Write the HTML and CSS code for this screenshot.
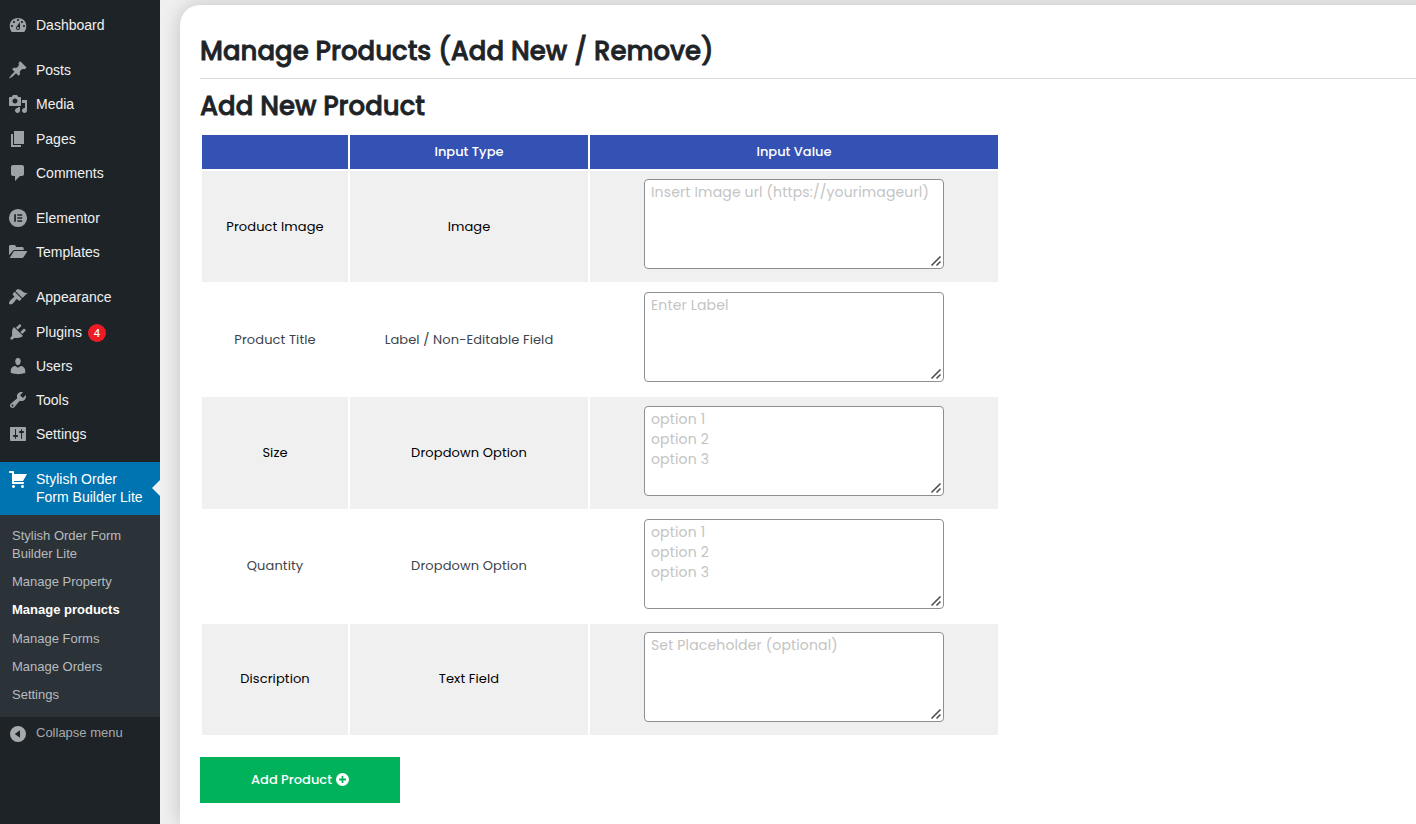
FILE: index.html
```html
<!DOCTYPE html>
<html lang="en">
<head>
<meta charset="utf-8">
<title>Manage Products</title>
<link rel="stylesheet" href="styles.css">
</head>
<body>
<svg class="defs" width="0" height="0"><symbol id="grip" viewBox="0 0 12 12"><path d="M1.500 10.500L10.500 1.500M6.500 10.500L10.500 6.500" stroke="#505050" stroke-width="1.600" fill="none"/></symbol></svg>
<div class="layout">
<nav class="sidebar">
  <ul class="menu">
    <li class="item"><svg class="icon" viewBox="0 0 20 20"><path d="M3.76 17h12.48c1.34-1.63 2.01-3.82 2.01-6 0-5.06-3.69-8-8.25-8S1.75 5.94 1.75 11c0 2.18.67 4.37 2.01 6zM10 4c.55 0 1 .45 1 1s-.45 1-1 1-1-.45-1-1 .45-1 1-1zM6 6c.55 0 1 .45 1 1s-.45 1-1 1-1-.45-1-1 .45-1 1-1zm8 0c.55 0 1 .45 1 1s-.45 1-1 1-1-.45-1-1 .45-1 1-1zm-5.37 5.55L12 7v6c0 1.1-.9 2-2 2s-2-.9-2-2c0-.57.24-1.08.63-1.45zM4 10c.55 0 1 .45 1 1s-.45 1-1 1-1-.45-1-1 .45-1 1-1zm12 0c.55 0 1 .45 1 1s-.45 1-1 1-1-.45-1-1 .45-1 1-1zm-5 3c0-.55-.45-1-1-1s-1 .45-1 1 .45 1 1 1 1-.45 1-1z"/></svg><span>Dashboard</span></li>
    <li class="item group"><svg class="icon" viewBox="0 0 20 20"><path d="M10.44 3.02l1.82-1.82 6.36 6.35-1.83 1.82c-1.05-.68-2.48-.57-3.41.36l-.75.75c-.92.93-1.04 2.35-.35 3.41l-1.83 1.82-2.41-2.41-2.8 2.79c-.42.42-3.38 2.71-3.8 2.29s1.86-3.39 2.28-3.81l2.79-2.79L4.1 9.36l1.83-1.82c1.05.69 2.48.57 3.4-.36l.75-.75c.93-.92 1.05-2.35.36-3.41z"/></svg><span>Posts</span></li>
    <li class="item"><svg class="icon" viewBox="0 0 20 20"><path d="M13 11V4c0-.55-.45-1-1-1h-1.67L9 1H5L3.67 3H2c-.55 0-1 .45-1 1v7c0 .55.45 1 1 1h10c.55 0 1-.45 1-1zM7 4.5c1.38 0 2.5 1.12 2.5 2.5S8.38 9.5 7 9.5 4.5 8.38 4.5 7 5.62 4.5 7 4.5zM14 6h5v10.5c0 1.38-1.12 2.5-2.5 2.5S14 17.88 14 16.5s1.12-2.5 2.5-2.5c.17 0 .34.02.5.05V9h-3V6zm-4 8.05V13h2v3.5c0 1.38-1.12 2.5-2.5 2.5S7 17.88 7 16.5 8.12 14 9.5 14c.17 0 .34.02.5.05z"/></svg><span>Media</span></li>
    <li class="item"><svg class="icon" viewBox="0 0 20 20"><path d="M6 15V2h10v13H6zm-1 1h8v2H3V5h2v11z"/></svg><span>Pages</span></li>
    <li class="item"><svg class="icon" viewBox="0 0 20 20"><path d="M5 2h9c1.1 0 2 .9 2 2v7c0 1.1-.9 2-2 2h-2l-5 5v-5H5c-1.1 0-2-.9-2-2V4c0-1.1.9-2 2-2z"/></svg><span>Comments</span></li>
    <li class="item group"><svg class="icon" viewBox="0 0 20 20"><path fill-rule="evenodd" d="M10 .9a9.1 9.1 0 1 0 0 18.200a9.1 9.1 0 0 0 0-18.200zM6.200 6.300h1.700v7.500H6.200zM9.300 6.300h4.800v1.500H9.300zM9.300 9.300h4.800v1.500H9.300zM9.300 12.300h4.800v1.500H9.300z"/></svg><span>Elementor</span></li>
    <li class="item"><svg class="icon" viewBox="0 0 20 20"><path d="M1 13.200V4.600C1 3.500 1.700 3 2.600 3h3.600c.8 0 1.200.6 1.500 1.200l.4.800h6c1 0 1.600.6 1.600 1.500V8H6.800c-1 0-1.700.4-2.300 1.200zM5.300 10c.4-.6.9-.9 1.600-.9H18.300c.6 0 .9.500.5 1.100l-3.100 4.700c-.4.700-.9 1-1.700 1H1.700z"/></svg><span>Templates</span></li>
    <li class="item group"><svg class="icon" viewBox="0 0 20 20"><path d="M14.480 11.060L7.410 3.990l1.500-1.500c.5-.56 2.300-.47 3.510.32 1.210.8 1.430 1.280 2.910 2.100 1.180.64 2.450 1.260 4.450.85zm-.71.71L6.700 4.700 4.930 6.470c-.39.39-.39 1.020 0 1.410l1.060 1.060c.39.39.39 1.030 0 1.420-.6.6-1.430 1.110-2.210 1.690-.35.26-.7.53-1.010.84C1.430 14.230.4 16.080 1.400 17.070c.99 1 2.840-.03 4.180-1.360.31-.31.58-.66.85-1.020.57-.78 1.080-1.610 1.690-2.210.39-.39 1.020-.39 1.410 0l1.060 1.060c.39.39 1.020.39 1.410 0z"/></svg><span>Appearance</span></li>
    <li class="item"><svg class="icon" viewBox="0 0 20 20"><path d="M13.110 4.360L9.870 7.600 8 5.730l3.240-3.240c.35-.34 1.050-.2 1.560.32.52.51.66 1.210.31 1.550zm-8 1.770l.91-1.120 9.010 9.010-1.190.84c-.71.71-2.630 1.160-3.820 1.160H6.140L4.900 17.260c-.59.59-1.540.59-2.120 0-.59-.58-.59-1.530 0-2.120l1.240-1.240v-3.880c0-1.130.4-3.190 1.090-3.890zm7.260 3.970l3.240-3.240c.34-.35 1.040-.21 1.550.31.52.51.66 1.210.31 1.550l-3.240 3.250z"/></svg><span>Plugins</span><span class="count">4</span></li>
    <li class="item"><svg class="icon" viewBox="0 0 20 20"><path d="M10 9.250c-2.270 0-2.730-3.440-2.730-3.440C7 4.020 7.820 2 9.970 2c2.160 0 2.980 2.020 2.710 3.810 0 0-.41 3.440-2.680 3.440zm0 2.570L12.720 10c2.390 0 4.520 2.330 4.520 4.530v2.490s-3.650 1.130-7.240 1.130c-3.650 0-7.240-1.130-7.240-1.130v-2.490c0-2.250 1.940-4.480 4.470-4.480z"/></svg><span>Users</span></li>
    <li class="item"><svg class="icon" viewBox="0 0 20 20"><path d="M16.680 9.770c-1.340 1.340-3.300 1.670-4.950.99l-5.410 6.520c-.99.99-2.590.99-3.580 0s-.99-2.590 0-3.570l6.520-5.420c-.68-1.650-.35-3.610.99-4.950 1.280-1.280 3.120-1.620 4.720-1.060l-2.890 2.890 2.820 2.820 2.860-2.870c.53 1.580.18 3.390-1.080 4.650zM3.810 16.210c.4.39 1.040.39 1.430 0 .4-.4.4-1.040 0-1.430-.39-.4-1.030-.4-1.430 0-.39.39-.39 1.030 0 1.430z"/></svg><span>Tools</span></li>
    <li class="item"><svg class="icon" viewBox="0 0 20 20"><path d="M18 16V4c0-.55-.45-1-1-1H3c-.55 0-1 .45-1 1v12c0 .55.45 1 1 1h14c.55 0 1-.45 1-1zM8 11h1c.55 0 1 .45 1 1s-.45 1-1 1H8v1.500c0 .28-.22.5-.5.5s-.5-.22-.5-.5V13H6c-.55 0-1-.45-1-1s.45-1 1-1h1V5.500c0-.28.22-.5.5-.5s.5.22.5.5V11zm5-2h-1c-.55 0-1-.45-1-1s.45-1 1-1h1V5.500c0-.28.22-.5.5-.5s.5.22.5.5V7h1c.55 0 1 .45 1 1s-.45 1-1 1h-1v5.500c0 .28-.22.5-.5.5s-.5-.22-.5-.5V9z"/></svg><span>Settings</span></li>
    <li class="item group active"><svg class="icon" viewBox="0 0 20 20"><path d="M6 13h9c.55 0 1 .45 1 1s-.45 1-1 1H5c-.55 0-1-.45-1-1V4H2c-.55 0-1-.45-1-1s.45-1 1-1h3c.55 0 1 .45 1 1v2h13l-4 7H6v1zm-.5 3c.83 0 1.500.67 1.500 1.500S6.330 19 5.500 19 4 18.330 4 17.500 4.670 16 5.500 16zm9 0c.83 0 1.500.67 1.500 1.500s-.67 1.500-1.500 1.500-1.500-.67-1.500-1.500.67-1.500 1.500-1.500z"/></svg><span>Stylish Order<br>Form Builder Lite</span></li>
  </ul>
  <ul class="submenu">
    <li>Stylish Order Form<br>Builder Lite</li>
    <li>Manage Property</li>
    <li class="current">Manage products</li>
    <li>Manage Forms</li>
    <li>Manage Orders</li>
    <li>Settings</li>
  </ul>
  <div class="collapse"><svg class="icon" viewBox="0 0 20 20"><path fill-rule="evenodd" d="M10 2a8 8 0 1 0 0 16a8 8 0 0 0 0-16zM12 6.200v7.600L6.800 10z"/></svg><span>Collapse menu</span></div>
</nav>
<main class="main">
  <section class="panel">
    <h1 class="title">Manage Products (Add New / Remove)</h1>
    <h2 class="subtitle">Add New Product</h2>
    <table class="fields">
      <thead><tr><th class="c1"></th><th class="c2">Input Type</th><th class="c3">Input Value</th></tr></thead>
      <tbody>
        <tr><td>Product Image</td><td>Image</td><td><div class="field"><textarea class="box" placeholder="Insert Image url (https://yourimageurl)"></textarea><svg class="grip"><use href="#grip"/></svg></div></td></tr>
        <tr><td>Product Title</td><td>Label / Non-Editable Field</td><td><div class="field"><textarea class="box" placeholder="Enter Label"></textarea><svg class="grip"><use href="#grip"/></svg></div></td></tr>
        <tr><td>Size</td><td>Dropdown Option</td><td><div class="field"><textarea class="box" placeholder="option 1&#10;option 2&#10;option 3"></textarea><svg class="grip"><use href="#grip"/></svg></div></td></tr>
        <tr><td>Quantity</td><td>Dropdown Option</td><td><div class="field"><textarea class="box" placeholder="option 1&#10;option 2&#10;option 3"></textarea><svg class="grip"><use href="#grip"/></svg></div></td></tr>
        <tr><td>Discription</td><td>Text Field</td><td><div class="field"><textarea class="box" placeholder="Set Placeholder (optional)"></textarea><svg class="grip"><use href="#grip"/></svg></div></td></tr>
      </tbody>
    </table>
    <button class="add">Add Product <svg class="plus" viewBox="0 0 14 14"><circle cx="7" cy="7" r="7" fill="#fff"/><path d="M7 3.300v7.400M3.300 7h7.400" stroke="#00b259" stroke-width="1.900"/></svg></button>
  </section>
</main>
</div>
</body>
</html>
```
FILE: styles.css
```css
* { box-sizing: border-box; }
body {
  margin: 0;
  height: 824px;
  overflow: hidden;
  background: #f0f0f1;
  font-family: "Liberation Sans", Arial, sans-serif;
}
ul { list-style: none; margin: 0; padding: 0; }
.defs { display: none; }
.layout { display: flex; height: 824px; }
.sidebar { flex: 0 0 160px; background: #1d2327; padding-top: 8px; }
.item {
  position: relative;
  display: flex;
  padding: 8px 0 8px 8px;
  font-size: 14px;
  line-height: 18.2px;
  color: #f0f0f1;
}
.item.group { margin-top: 11px; }
.icon { flex: none; width: 20px; height: 20px; margin: -1px 8px -1px 0; fill: #9ca2a7; }
.active { height: 53px; background: #0073b1; color: #fff; line-height: 18px; }
.active .icon { fill: #fff; }
.active::after {
  content: "";
  position: absolute;
  right: 0;
  top: 50%;
  margin-top: -9px;
  border: 8px solid transparent;
  border-right-color: #f0f0f1;
  border-left: 0;
}
.count {
  width: 18px;
  height: 18px;
  margin: 1px 0 -1px 6px;
  border-radius: 9px;
  background: #ed1c24;
  color: #fff;
  font: 600 11px/17px "Open Sans", sans-serif;
  text-align: center;
}
.submenu { background: #2c3338; padding: 6.4px 0 8px; }
.submenu li { padding: 5px 12px; font-size: 13px; line-height: 18.2px; color: #b6bbbf; }
.submenu .current { color: #fff; font-weight: 700; }
.collapse { display: flex; padding: 7px 0 0 8px; font-size: 13px; line-height: 18.2px; color: #a7aaad; }
.collapse .icon { margin-top: 0; fill: #a7aaad; }

.main { flex: 1; min-width: 0; padding: 5px 0 0 20px; }
.panel {
  height: 819px;
  margin-right: -20px;
  padding: 24px 20px 0;
  border-radius: 20px 0 0 0;
  background: #fff;
  box-shadow: 0 0 20px rgba(0, 0, 0, .2);
  font-family: Poppins, Inter, sans-serif;
}
.title, .subtitle {
  margin: 0;
  font-size: 26px;
  font-weight: 500;
  line-height: 44px;
  color: #1d2327;
  white-space: nowrap;
  -webkit-text-stroke: .8px #1d2327;
}
.title { height: 50px; border-bottom: 1px solid #dcdcde; }
.subtitle { margin-top: 5px; height: 49px; }
.fields { width: 800px; table-layout: fixed; border-spacing: 2px; font-size: 13px; text-align: center; }
.fields th { height: 34px; padding: 0; background: #3452b4; color: #fff; font-weight: 500; }
.c1 { width: 146px; }
.c2 { width: 238px; }
.fields td { height: 111.2px; padding: 0; color: #3c434a; letter-spacing: .1px; }
.fields tr:nth-child(odd) td { background: #f0f0f0; color: #000; }
.field { position: relative; width: 300px; height: 90px; margin: -4.6px auto 0; }
.box {
  display: block;
  width: 300px;
  height: 90px;
  padding: 2px 6px;
  border: 1px solid #8c8f94;
  border-radius: 4px;
  background: #fff;
  font: inherit;
  font-size: 14px;
  line-height: 20px;
  letter-spacing: .15px;
  resize: none;
}
.grip { position: absolute; right: 2px; bottom: 2px; width: 12px; height: 12px; }
.box::placeholder { color: #c4c4c4; }
.add {
  display: flex;
  align-items: center;
  justify-content: center;
  gap: 4px;
  width: 200px;
  height: 46px;
  margin-top: 20px;
  padding: 0;
  border: 0;
  background: #00b259;
  color: #fff;
  font: inherit;
  font-size: 13px;
  font-weight: 500;
}
.plus { width: 13px; height: 13px; }
```
